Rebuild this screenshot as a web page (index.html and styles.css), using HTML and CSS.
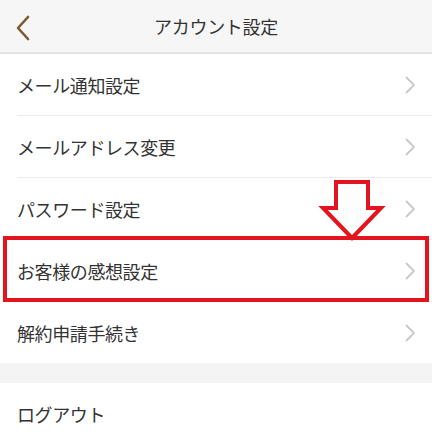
FILE: index.html
```html
<!DOCTYPE html>
<html lang="ja">
<head>
<meta charset="utf-8">
<title>アカウント設定</title>
<link rel="stylesheet" href="styles.css">
</head>
<body>
<div class="page">
  <header class="header">
    <svg class="back" width="16" height="26" viewBox="0 0 16 26"><path d="M13 2 L3 13 L13 24" fill="none" stroke="#7b5a2c" stroke-width="2.6" stroke-linecap="round" stroke-linejoin="round"/></svg>
    <h1 class="title">アカウント設定</h1>
  </header>
  <ul class="list">
    <li class="item"><span>メール通知設定</span><svg class="chev" width="12" height="20" viewBox="0 0 12 20"><path d="M2 2 L10 10 L2 18" fill="none" stroke="#c9c9c9" stroke-width="1.8"/></svg></li>
    <li class="item"><span>メールアドレス変更</span><svg class="chev" width="12" height="20" viewBox="0 0 12 20"><path d="M2 2 L10 10 L2 18" fill="none" stroke="#c9c9c9" stroke-width="1.8"/></svg></li>
    <li class="item"><span>パスワード設定</span><svg class="chev" width="12" height="20" viewBox="0 0 12 20"><path d="M2 2 L10 10 L2 18" fill="none" stroke="#c9c9c9" stroke-width="1.8"/></svg></li>
    <li class="item highlighted"><span>お客様の感想設定</span><svg class="chev" width="12" height="20" viewBox="0 0 12 20"><path d="M2 2 L10 10 L2 18" fill="none" stroke="#c9c9c9" stroke-width="1.8"/></svg><div class="redbox"></div></li>
    <li class="item last"><span>解約申請手続き</span><svg class="chev" width="12" height="20" viewBox="0 0 12 20"><path d="M2 2 L10 10 L2 18" fill="none" stroke="#c9c9c9" stroke-width="1.8"/></svg></li>
  </ul>
  <div class="band"></div>
  <ul class="list">
    <li class="item last"><span>ログアウト</span></li>
  </ul>
  <svg class="arrow" width="70" height="68" viewBox="318 176 70 68"><polygon points="336,182 368,182 368,208 381,208 352,238 323,208 336,208" fill="#fff" stroke="#e3141d" stroke-width="4" stroke-linejoin="miter"/></svg>
</div>
</body>
</html>
```
FILE: styles.css
```css
html, body {
  margin: 0;
  padding: 0;
  background: #fff;
}
.page {
  position: relative;
  width: 432px;
  font-family: "Noto Sans CJK JP", "Noto Sans", sans-serif;
  color: #333;
}
.header {
  height: 52px;
  background: #f6f6f6;
  border-bottom: 2px solid #e4e4e4;
  display: flex;
  align-items: center;
  justify-content: center;
  position: relative;
}
.back {
  position: absolute;
  left: 15px;
  top: 15px;
}
.title {
  margin: 0;
  font-size: 18px;
  font-weight: 400;
  color: #333;
  letter-spacing: -0.3px;
}
.list {
  list-style: none;
  margin: 0;
  padding: 0 0 0 17px;
}
.item {
  position: relative;
  height: 61px;
  border-bottom: 1px solid #ececec;
  display: flex;
  align-items: center;
  justify-content: space-between;
  padding-right: 16px;
  font-size: 18px;
  letter-spacing: -0.4px;
}
.item.last {
  border-bottom: none;
}
.chev {
  margin-top: 1px;
}
.redbox {
  position: absolute;
  left: -14px;
  right: 3px;
  top: -4px;
  bottom: -1px;
  border: 4px solid #e3141d;
  pointer-events: none;
}
.band {
  height: 20px;
  background: #f4f4f4;
}
.arrow {
  position: absolute;
  left: 318px;
  top: 176px;
}
```
